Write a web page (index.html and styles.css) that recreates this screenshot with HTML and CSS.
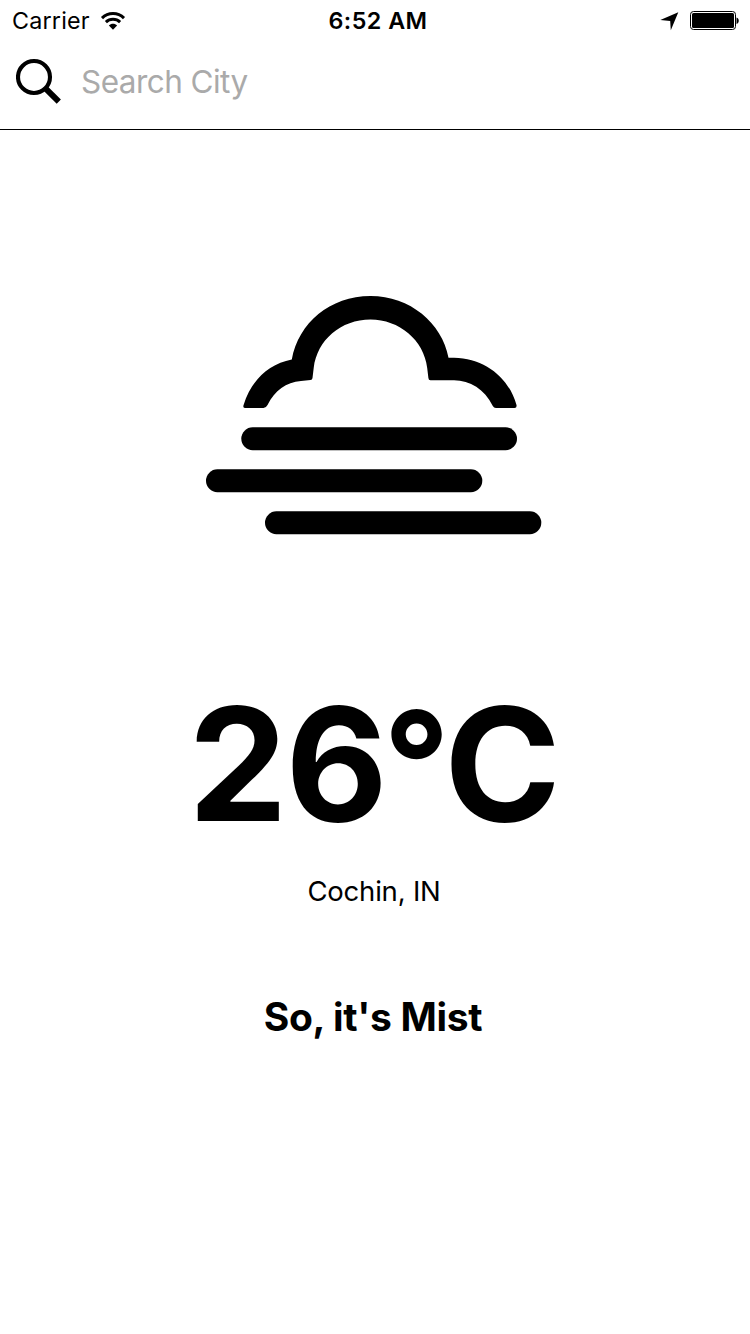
FILE: index.html
```html
<!DOCTYPE html>
<html lang="en">
<head>
<meta charset="utf-8">
<title>Weather</title>
<link rel="stylesheet" href="styles.css">
</head>
<body>
<main class="screen">
  <div class="status">
    <div class="status-left">
      <span class="carrier">Carrier</span>
      <svg class="wifi" width="26" height="20" viewBox="0 0 26 20">
        <path class="wifi-arc" d="M2 7.1C8.2 .9 17.8 .9 24 7.1M5.9 11.2c4-3.8 10.2-3.8 14.2 0"/>
        <path d="M8.9 14.5c2.3-2.2 5.9-2.2 8.2 0L13 18.7z"/>
      </svg>
    </div>
    <span class="clock">6:52 AM</span>
    <div class="status-right">
      <svg class="location" width="20" height="20" viewBox="0 0 20 20"><path d="M18.3 1.2 10.8 19.3 10.2 9.9 .3 9z"/></svg>
      <svg class="battery" width="50" height="20" viewBox="0 0 50 20">
        <rect class="battery-case" x=".5" y=".5" width="45" height="18" rx="3"/>
        <rect x="2" y="2" width="42" height="15" rx="1.5"/>
        <path d="M46.5 6.5c3 .5 3 6 0 6.5z"/>
      </svg>
    </div>
  </div>
  <div class="search">
    <svg class="magnifier" width="48" height="48" viewBox="0 0 48 48">
      <circle cx="18" cy="19" r="16"/>
      <path class="magnifier-neck" d="m28.7 29.7 4 4"/>
      <path class="magnifier-handle" d="M30.2 31.2 42.8 43.6"/>
    </svg>
    <span class="placeholder">Search City</span>
  </div>
  <section class="weather">
    <svg class="mist" width="342" height="242" viewBox="204 294 342 242">
      <path d="M245.5 408Q242.5 408 243.6 405C251 381 268 364 291.8 359.5C298.5 323 330 296 370.5 296C410 296 442 323 448.5 357.7L454 357.7C485 358 509 378 516.5 405Q517 408 514.5 408L496 408Q493.8 408 492.8 406C484.5 389 470 380.5 454 380.3L430.5 380.3Q428.5 380.3 428.4 378L427.2 368C424 340 399 319.5 370.5 319.5C341 319.5 317 340 313.7 368L312.5 378Q312.3 379.8 310.5 380L301 381C286 382.5 275 390 267.5 405Q266 408 263.5 408Z"/>
      <rect x="241.3" y="427.3" width="275.7" height="22.9" rx="11.4"/>
      <rect x="206" y="469.3" width="276.3" height="22.9" rx="11.4"/>
      <rect x="265" y="511.3" width="276.3" height="22.9" rx="11.4"/>
    </svg>
    <div class="temperature"><span class="tens">2</span><span class="ones">6</span><span class="degree">°</span>C</div>
    <div class="city">Cochin, IN</div>
    <div class="summary">So, it's Mist</div>
  </section>
</main>
</body>
</html>
```

FILE: styles.css
```css
body {
  margin: 0;
  background: #fff;
  color: #000;
  font-family: Inter, "Liberation Sans", sans-serif;
}

.screen {
  width: 750px;
  height: 1334px;
  overflow: hidden;
}

.status {
  display: grid;
  grid-template-columns: 1fr auto 1fr;
  align-items: center;
  height: 41px;
  padding: 0 10px 0 12px;
  box-sizing: border-box;
  font-size: 23.3px;
}

.status-left,
.status-right {
  display: flex;
  align-items: center;
}

.status-left {
  gap: 10px;
}

.status-right {
  justify-content: flex-end;
  gap: 10px;
}

.carrier {
  letter-spacing: 0.2px;
}

.clock {
  padding-left: 4px;
  font-weight: 600;
  letter-spacing: 0.45px;
}

.wifi-arc {
  fill: none;
  stroke: #000;
  stroke-width: 3;
}

.battery-case {
  fill: none;
  stroke: #000;
}

.search {
  display: flex;
  align-items: center;
  gap: 17px;
  height: 89px;
  padding: 0 16px 7px;
  box-sizing: border-box;
  border-bottom: 1px solid #000;
}

.magnifier {
  fill: none;
  stroke: #000;
  stroke-width: 4.1;
}

.magnifier-handle {
  stroke-width: 6;
}

.placeholder {
  color: #aaa;
  font-size: 31.5px;
  letter-spacing: -0.55px;
}

.weather {
  display: flex;
  flex-direction: column;
  align-items: center;
  padding-top: 164px;
}

.mist {
  display: block;
}

.temperature {
  height: 200px;
  margin-top: 127px;
  padding-right: 1px;
  font-size: 157.5px;
  font-weight: 700;
  line-height: 201px;
}

.tens {
  letter-spacing: -2px;
}

.ones {
  letter-spacing: -4.5px;
}

.degree {
  font-size: 145px;
  letter-spacing: -5.6px;
  line-height: 1;
  vertical-align: 6px;
}

.city {
  margin-top: 8px;
  padding-right: 2px;
  font-size: 27.5px;
  letter-spacing: -0.2px;
  line-height: 40px;
}

.summary {
  margin-top: 81px;
  padding-right: 4px;
  font-size: 39px;
  font-weight: 700;
  letter-spacing: -0.3px;
  line-height: 50px;
}
```
